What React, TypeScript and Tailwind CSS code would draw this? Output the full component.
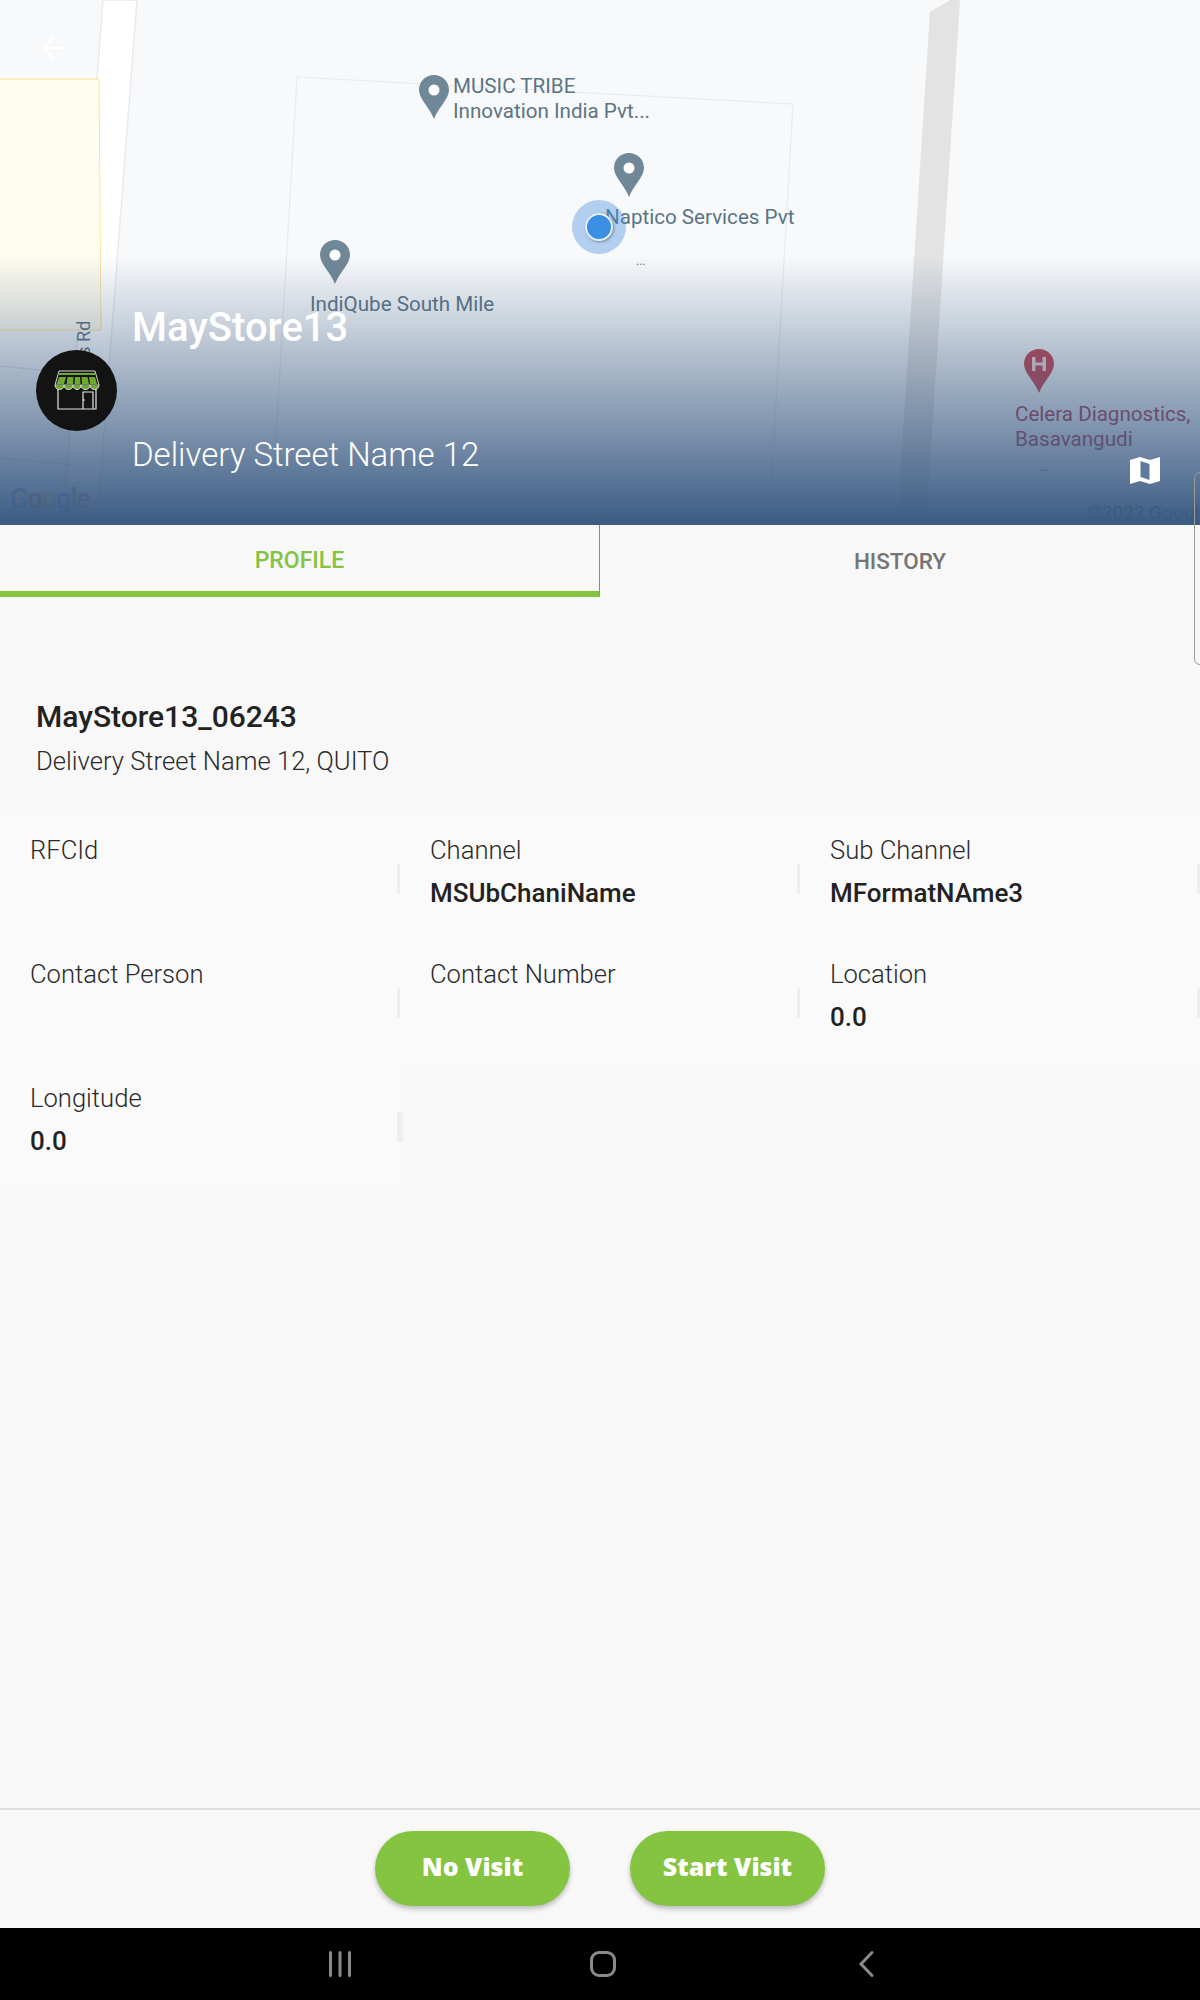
import React from "react";

const roboto = { fontFamily: "Roboto, sans-serif" };

const Pin = ({ x, y, color = "#6f8796", hospital = false }: { x: number; y: number; color?: string; hospital?: boolean }) => (
  <svg className="absolute" style={{ left: x, top: y }} width="30" height="44" viewBox="0 0 30 44">
    <path d="M15 0C6.7 0 0 6.6 0 15c0 9 10.500 17 15 29 4.500-12 15-20 15-29C30 6.600 23.300 0 15 0Z" fill={color} />
    {hospital ? (
      <path d="M8 8h3.500v5.500h7V8H22v14h-3.500v-5.500h-7V22H8Z" fill="#f7dcdc" />
    ) : (
      <circle cx="15" cy="15" r="5.500" fill="#fff" />
    )}
  </svg>
);

const MapLabel = ({ x, y, color = "#5b7484", children }: { x: number; y: number; color?: string; children: React.ReactNode }) => (
  <div className="absolute text-[20.6px] leading-[25px] whitespace-nowrap" style={{ left: x, top: y, color }}>
    {children}
  </div>
);

const StoreIcon = () => (
  <svg width="46" height="40" viewBox="0 0 46 40" fill="none">
    <path d="M4 14v25h38V14" stroke="#e4e4e4" strokeWidth="1.200" />
    <path d="M29 39V22h10v17" stroke="#e4e4e4" strokeWidth="1.200" />
    <path d="M29 30h2" stroke="#e4e4e4" strokeWidth="1.200" />
    <path d="M5 1h36l4 14H1Z" fill="#131313" stroke="#d8d8d8" strokeWidth="1" />
    <rect x="5" y="3" width="36" height="2" fill="#6ea82f" />
    <path d="M5 7h7l-2 7H2.500ZM13.500 7h6l-.5 7h-6.500ZM21 7h5l.5 7h-6ZM27.500 7h6l1.500 7h-7ZM35 7h6l2 7h-7Z" fill="#6ea82f" />
    <path
      d="M1 15c0 6 9 6 9 0 0 6 9 6 9 0 0 6 8 6 8 0 0 6 9 6 9 0 0 6 9 6 9 0"
      fill="#6ea82f"
      stroke="#d8d8d8"
      strokeWidth="1"
    />
  </svg>
);

const MapHeader = () => (
  <div className="relative h-[525px] overflow-hidden bg-[#f8f9fb]">
    {/* map tiles */}
    <svg className="absolute inset-0" width="1200" height="525" viewBox="0 0 1200 525">
      <path d="M103 0H137L97 525H63Z" fill="#ffffff" stroke="#e8eaee" strokeWidth="1.500" />
      <path d="M-2 79H99L101 330H-2Z" fill="#fffcf0" stroke="#fde293" strokeWidth="1" />
      <path d="M0 366L60 372M0 458L75 465" stroke="#d9dde3" strokeWidth="1.200" />
      <path d="M297 77L793 104L770 507M297 77L272 507" fill="none" stroke="#e8eaec" strokeWidth="1.200" />
      <path d="M930 12L950 0H960L927 510H898Z" fill="#e3e3e3" />
    </svg>

    <Pin x={419} y={75} />
    <MapLabel x={453} y={74}>MUSIC TRIBE</MapLabel>
    <MapLabel x={453} y={99}>Innovation India Pvt...</MapLabel>
    <Pin x={320} y={240} />
    <MapLabel x={310} y={292}>IndiQube South Mile</MapLabel>
    <Pin x={614} y={153} />
    <MapLabel x={605} y={205}>Naptico Services Pvt</MapLabel>
    <MapLabel x={636} y={246}>
      <span className="text-[12px]">...</span>
    </MapLabel>
    <Pin x={1024} y={349} color="#c8404c" hospital />
    <MapLabel x={1015} y={402} color="#b0384a">Celera Diagnostics,</MapLabel>
    <MapLabel x={1015} y={427} color="#b0384a">Basavangudi</MapLabel>
    <MapLabel x={1039} y={452} color="#b0384a">
      <span className="text-[12px]">...</span>
    </MapLabel>
    <div className="absolute left-[84px] top-[356px] -rotate-90 origin-left text-[18px] leading-none text-[#5b7484] whitespace-nowrap">
      ss Rd
    </div>
    <div className="absolute left-[10px] top-[479px] text-[27px] font-medium leading-[40px] tracking-[-1px] opacity-60">
      <span className="text-[#4285f4]">G</span>
      <span className="text-[#ea4335]">o</span>
      <span className="text-[#fbbc05]">o</span>
      <span className="text-[#4285f4]">g</span>
      <span className="text-[#34a853]">l</span>
      <span className="text-[#ea4335]">e</span>
    </div>
    <div className="absolute left-[1087px] top-[501px] text-[19px] leading-[24px] text-[#555] whitespace-nowrap">©2022 Google</div>

    {/* my location */}
    <div className="absolute left-[572px] top-[200px] flex h-[54px] w-[54px] items-center justify-center rounded-full bg-[#4a90e2]/40">
      <div className="h-[28px] w-[28px] rounded-full border-2 border-[#e6eef8] bg-[#3b8fe4] shadow-[1px_1px_3px_rgba(0,0,0,0.35)]" />
    </div>

    {/* scrim */}
    <div className="absolute inset-x-0 bottom-0 h-[270px] bg-gradient-to-b from-[#3b5b82]/0 to-[#3b5b82]" />

    {/* back arrow */}
    <svg className="absolute left-[42px] top-[36px]" width="24" height="24" viewBox="0 0 24 24" fill="none">
      <path d="M24 12H3M12 1.500L1.500 12 12 22.500" stroke="#fff" strokeWidth="2" />
    </svg>

    {/* store info */}
    <div className="absolute inset-x-0 top-[302px] flex h-[176px] items-center pl-9">
      <div className="flex h-[81px] w-[81px] shrink-0 items-center justify-center rounded-full bg-[#131313]">
        <StoreIcon />
      </div>
      <div className="ml-[15px] flex h-full flex-col justify-between py-[2px] text-white">
        <div className="text-[40px] font-medium leading-[48px]">MayStore13</div>
        <div className="text-[33px] font-light leading-[42px]">Delivery Street Name 12</div>
      </div>
    </div>

    {/* map toggle */}
    <svg className="absolute left-[1128px] top-[454px]" width="34" height="32" viewBox="0 0 34 32">
      <path d="M2 6l10-3 10 3 10-3v24l-10 3-10-3-10 3Z" fill="#fff" />
      <path d="M12.500 7v16l9 3V10Z" fill="#5f7a9a" />
    </svg>
  </div>
);

const Tabs = () => (
  <div className="flex h-[72px]">
    <div className="flex w-[600px] items-center justify-center border-r border-[#8a8a8a] border-b-[6px] border-b-[#84c441] pt-[6px] text-[23px] font-medium text-[#84c441]">
      PROFILE
    </div>
    <div className="flex flex-1 items-center justify-center pt-[2px] text-[22.500px] font-medium text-[#757575]">HISTORY</div>
  </div>
);

const fields = [
  { label: "RFCId", value: "" },
  { label: "Channel", value: "MSUbChaniName" },
  { label: "Sub Channel", value: "MFormatNAme3" },
  { label: "Contact Person", value: "" },
  { label: "Contact Number", value: "" },
  { label: "Location", value: "0.0" },
  { label: "Longitude", value: "0.0" },
];

const FieldCard = ({ label, value, last }: { label: string; value: string; last: boolean }) => (
  <div className="relative h-[124px] bg-[#fafafa] pl-[30px] pt-[18px]">
    <div className="text-[25.600px] font-light leading-[36px] text-[#2a2a2a]">{label}</div>
    <div className="mt-[7px] text-[26px] font-medium leading-[36px] text-[#222]">{value}</div>
    <div className={`absolute right-0 top-[50px] h-[30px] bg-[#eeeeee] ${last ? "w-[6px] -mr-[3px]" : "w-[3px]"}`} />
  </div>
);

export default function App() {
  return (
    <div className="relative flex h-[2000px] w-[1200px] flex-col overflow-hidden bg-[#f8f8f8]" style={roboto}>
      <MapHeader />
      <Tabs />

      <div className="flex-1">
        <div className="px-9 pt-[102px]">
          <div className="text-[30px] font-medium leading-[36px] text-[#222]">MayStore13_06243</div>
          <div className="mt-[8px] text-[25.600px] font-light leading-[36px] text-[#2a2a2a]">Delivery Street Name 12, QUITO</div>
        </div>
        <div className="mt-[35px] grid grid-cols-3">
          {fields.map((f, i) => (
            <FieldCard key={f.label} label={f.label} value={f.value} last={i === 6} />
          ))}
        </div>
      </div>

      <div className="flex h-[120px] items-center justify-center gap-[60px] border-t-2 border-[#dddddd] pb-[2px]">
        {["No Visit", "Start Visit"].map((t) => (
          <button
            key={t}
            className="h-[75px] w-[195px] rounded-full bg-[#84c441] pb-[3px] text-[25px] font-extrabold text-white shadow-[0_3px_5px_rgba(0,0,0,0.25)]"
            style={{ fontFamily: "'Open Sans', sans-serif" }}
          >
            {t}
          </button>
        ))}
      </div>

      <div className="flex h-[72px] items-center bg-black pl-[325px]">
        <svg width="30" height="30" viewBox="0 0 30 30" fill="none">
          <path d="M5.500 3.500v23M15 3.500v23M24.500 3.500v23" stroke="#8a8a8a" strokeWidth="3" strokeLinecap="round" />
        </svg>
        <div className="ml-[235px] h-[26px] w-[26px] rounded-[9px] border-[3px] border-[#8a8a8a]" />
        <svg className="ml-[240px]" width="20" height="30" viewBox="0 0 20 30" fill="none">
          <path d="M16 3.500L5 15l11 11.500" stroke="#8a8a8a" strokeWidth="3" strokeLinecap="round" />
        </svg>
      </div>

      {/* edge handle */}
      <div className="absolute left-[1194px] top-[472px] h-[193px] w-[12px] rounded-[8px] border border-[#9a9a9a]" />
    </div>
  );
}
